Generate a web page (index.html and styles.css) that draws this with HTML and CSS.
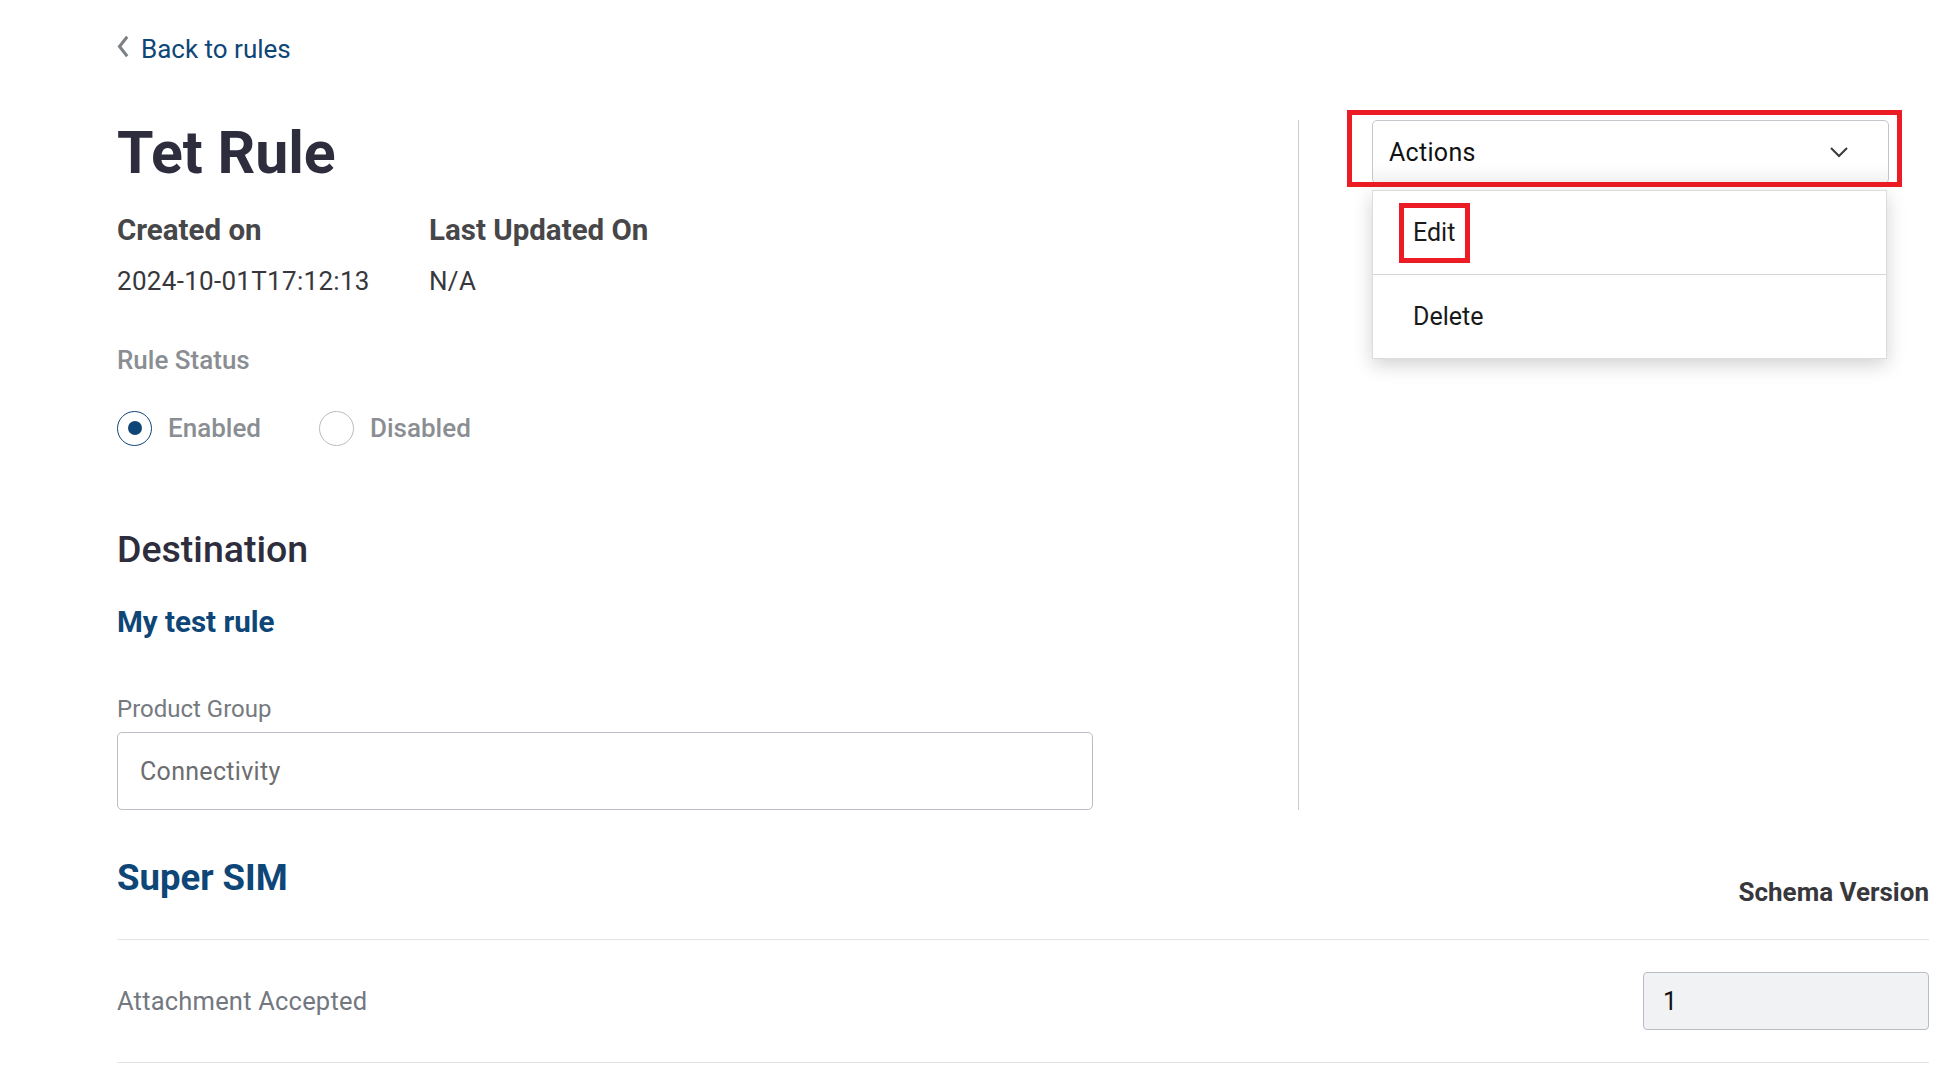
FILE: index.html
```html
<!DOCTYPE html>
<html>
<head>
    <title>Tet Rule</title>
    <link rel="stylesheet" href="styles.css">
</head>
<body>
<div class="page">
    <a href="#" class="back-link">
        <svg class="back-icon" width="12" height="23" viewBox="0 0 12 23"><path d="M10.2 1.8 L2.5 11.5 L10.2 21.2" fill="none" stroke="#7b8084" stroke-width="3"/></svg>
        Back to rules
    </a>

    <div class="top-row">
        <div class="rule-info">
            <h1>Tet Rule</h1>
            <div class="meta">
                <div class="meta-col">
                    <div class="meta-label">Created on</div>
                    <div class="meta-value">2024-10-01T17:12:13</div>
                </div>
                <div class="meta-col">
                    <div class="meta-label">Last Updated On</div>
                    <div class="meta-value">N/A</div>
                </div>
            </div>

            <div class="field-label status-label">Rule Status</div>
            <div class="radios">
                <label class="radio"><span class="radio-dot checked"></span>Enabled</label>
                <label class="radio"><span class="radio-dot"></span>Disabled</label>
            </div>

            <h2>Destination</h2>
            <div class="dest-name">My test rule</div>

            <div class="field-label group-label">Product Group</div>
            <div class="text-box">Connectivity</div>
        </div>

        <div class="side">
            <div class="actions">
                <div class="select">
                    Actions
                    <svg width="20" height="12" viewBox="0 0 20 12"><path d="M2 2 L10 10 L18 2" fill="none" stroke="#3a3a3a" stroke-width="2"/></svg>
                </div>
                <div class="mark mark-select"></div>
                <div class="menu">
                    <div class="menu-item"><span class="mark-text">Edit</span></div>
                    <div class="menu-item">Delete</div>
                </div>
            </div>
        </div>
    </div>

    <div class="sim-head">
        <div class="sim-title">Super SIM</div>
        <div class="schema">Schema Version</div>
    </div>
    <div class="sim-row">
        <div class="sim-label">Attachment Accepted</div>
        <div class="num-box">1</div>
    </div>
</div>
</body>
</html>
```

FILE: styles.css
```css
body {
	margin: 0;
	background-color: #FFFFFF;
	font-family: Roboto, "Liberation Sans", sans-serif;
	color: #333333;
}

.page {
	padding: 34px 22px 0 117px;
}

.back-link {
	display: flex;
	align-items: center;
	height: 30px;
	font-size: 26px;
	color: #0e4677;
	text-decoration: none;
}

.back-icon {
	margin: -6px 12px 0 0;
}

.top-row {
	display: flex;
	margin-top: 56px;
}

.rule-info {
	width: 1181px;
}

h1 {
	margin: 0;
	font-size: 59px;
	line-height: 66px;
	font-weight: bold;
	color: #2e2d3e;
}

.meta {
	display: flex;
	margin-top: 27px;
}

.meta-col {
	width: 312px;
}

.meta-label {
	font-size: 29.5px;
	line-height: 34px;
	font-weight: bold;
	color: #47474a;
}

.meta-value {
	margin-top: 19px;
	font-size: 26px;
	line-height: 30px;
	color: #38383c;
	letter-spacing: 0.3px;
}

.field-label {
	font-size: 26px;
	line-height: 30px;
	font-weight: 500;
	color: #8a8e93;
}

.status-label {
	margin-top: 49px;
}

.radios {
	display: flex;
	margin-top: 35px;
	height: 36px;
}

.radio {
	display: flex;
	align-items: center;
	font-size: 26px;
	font-weight: 500;
	color: #8a8e93;
	margin-right: 58px;
}

.radio-dot {
	width: 33px;
	height: 33px;
	border: 1.5px solid #b9bcc0;
	border-radius: 50%;
	margin-right: 16px;
	display: flex;
	align-items: center;
	justify-content: center;
}

.radio-dot.checked {
	border-color: #0e4677;
}

.radio-dot.checked::after {
	content: "";
	width: 14px;
	height: 14px;
	border-radius: 50%;
	background-color: #0e4677;
}

h2 {
	margin: 80px 0 0 0;
	font-size: 37.5px;
	line-height: 46px;
	font-weight: 500;
	color: #2e2d3e;
}

.dest-name {
	margin-top: 32px;
	font-size: 29.5px;
	line-height: 36px;
	font-weight: bold;
	color: #0e4677;
}

.group-label {
	margin-top: 54px;
	font-size: 24px;
	font-weight: 400;
	color: #757a7f;
}

.text-box {
	box-sizing: border-box;
	margin-top: 8px;
	width: 976px;
	height: 78px;
	border: 1px solid #b8bec4;
	border-radius: 5px;
	padding: 0 22px;
	display: flex;
	align-items: center;
	font-size: 25px;
	color: #6d6d70;
	letter-spacing: 0.3px;
}

.side {
	flex: 1;
	border-left: 1px solid #cfcfcf;
	padding-left: 73px;
}

.actions {
	position: relative;
	width: 517px;
}

.select {
	box-sizing: border-box;
	height: 64px;
	border: 1px solid #c3c7cb;
	border-radius: 5px;
	padding: 0 39px 0 16px;
	display: flex;
	align-items: center;
	justify-content: space-between;
	font-size: 25px;
	color: #111111;
	background: linear-gradient(#FFFFFF 70%, #f2f2f2);
	letter-spacing: 0.3px;
}

.mark {
	position: absolute;
	border: 5px solid #ec1c24;
}

.mark-select {
	left: -25px;
	top: -10px;
	width: 545px;
	height: 67px;
}

.menu {
	position: absolute;
	left: 0;
	top: 70px;
	width: 513px;
	background-color: #FFFFFF;
	border: 1px solid #dcdcdc;
	box-shadow: 0px 6px 18px 0px rgba(0, 0, 0, 0.18);
}

.menu-item {
	height: 83px;
	display: flex;
	align-items: center;
	padding-left: 40px;
	font-size: 25px;
	color: #1a1a1a;
}

.menu-item + .menu-item {
	border-top: 1px solid #d6d6d6;
}

.mark-text {
	border: 5px solid #ec1c24;
	padding: 10px 10px 11px 9px;
	margin-left: -14px;
}

.sim-head {
	display: flex;
	justify-content: space-between;
	align-items: flex-start;
	margin-top: 46px;
	padding-bottom: 32px;
	border-bottom: 1px solid #e3e3e3;
}

.sim-title {
	font-size: 36.5px;
	line-height: 44px;
	font-weight: bold;
	color: #0e4677;
}

.schema {
	margin-top: 21px;
	font-size: 26px;
	line-height: 30px;
	font-weight: bold;
	color: #38383c;
}

.sim-row {
	display: flex;
	justify-content: space-between;
	align-items: center;
	padding: 32px 0;
	border-bottom: 1px solid #e3e3e3;
}

.sim-label {
	font-size: 25.5px;
	color: #737880;
	letter-spacing: 0.2px;
}

.num-box {
	box-sizing: border-box;
	width: 286px;
	height: 58px;
	background-color: #f1f2f4;
	border: 1px solid #b8bec4;
	border-radius: 4px;
	padding: 0 19px;
	display: flex;
	align-items: center;
	font-size: 25px;
	color: #111111;
}
```
